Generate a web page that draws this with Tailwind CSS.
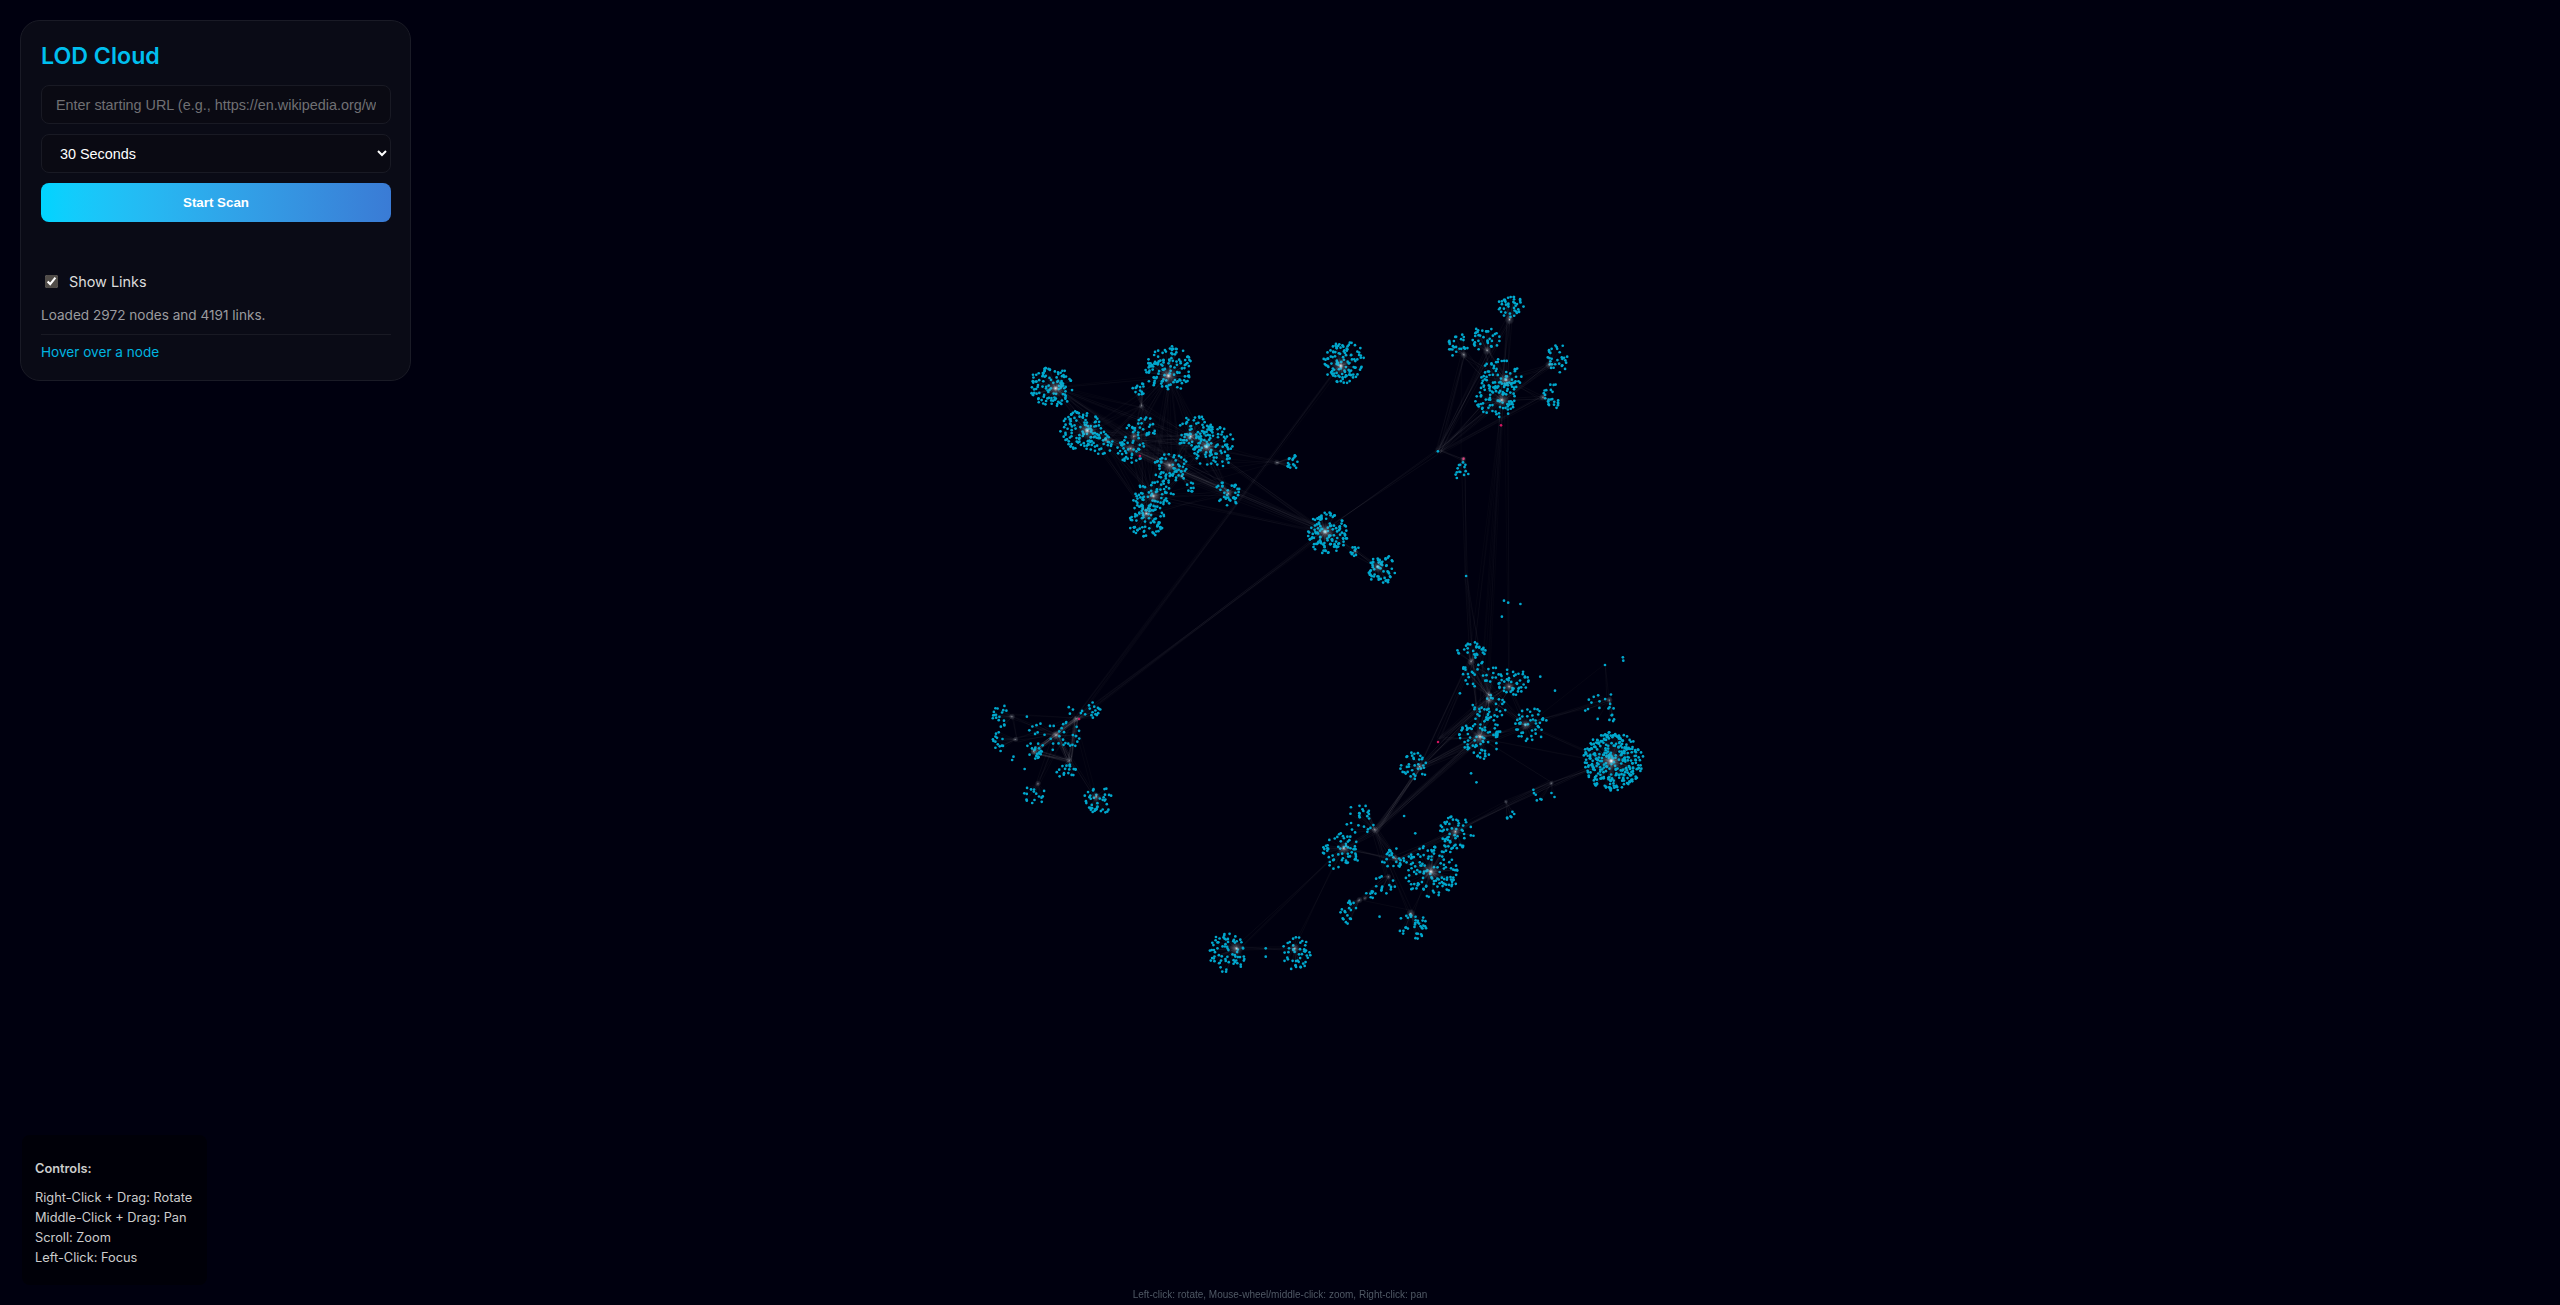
<!DOCTYPE html>
<html lang="en">
<head>
    <meta charset="UTF-8">
    <meta name="viewport" content="width=device-width, initial-scale=1.0">
    <title>LOD Cloud</title>
    <script src="https://cdn.jsdelivr.net/npm/@tailwindcss/browser@4"></script>
</head>
<body class="relative w-full h-screen overflow-hidden bg-[#00000f] font-['Inter',sans-serif] [color-scheme:dark]">
    <!-- Graph -->
    <canvas id="graph" width="2560" height="1305" class="absolute inset-0 block"></canvas>

    <!-- Scan panel -->
    <div class="absolute top-5 left-5 w-[391px] h-[361px] rounded-[20px] border border-[#1a1b26] bg-[#0a0b16] pl-5 pr-[19px] py-5 flex flex-col">
        <h1 class="text-[23.2px] leading-7 font-semibold text-[#00bfef] mt-[1px]">LOD Cloud</h1>
        <input type="text" placeholder="Enter starting URL (e.g., https://en.wikipedia.org/wiki/Main_Page)" class="mt-[15px] h-[39px] w-full shrink-0 rounded-lg border border-[#191a24] bg-[#0a0a13] px-[14px] text-[14.4px] text-white placeholder:text-[#707074] font-['Liberation_Sans',sans-serif] outline-none">
        <select class="mt-[10px] h-[39px] w-full shrink-0 rounded-lg border border-[#191a24] bg-[#0a0a13] pl-[14px] text-[14.4px] text-white font-['Liberation_Sans',sans-serif] outline-none appearance-auto">
            <option>30 Seconds</option>
            <option>60 Seconds</option>
            <option>120 Seconds</option>
        </select>
        <button class="mt-[10px] h-[39px] w-full shrink-0 rounded-lg bg-gradient-to-r from-[#00d4ff] to-[#3a7bd5] text-[13.33px] font-bold text-white font-['Liberation_Sans',sans-serif]">Start Scan</button>
        <label class="mt-[49px] flex items-center h-[22px] pl-[4px] text-[14.4px] text-[#dcdcdc]">
            <input type="checkbox" checked class="w-[13px] h-[13px] mr-[11px] m-0 accent-[#504c48]">
            Show Links
        </label>
        <p class="mt-[12px] text-[13.6px] leading-[20px] text-[#9b9b9f]">Loaded 2972 nodes and 4191 links.</p>
        <div class="mt-[9px] border-t border-[#191a24]"></div>
        <p class="mt-[7px] text-[13.6px] leading-[20px] text-[#00b4e0]">Hover over a node</p>
    </div>

    <!-- Controls help -->
    <div class="absolute left-[22px] bottom-[20px] w-[185px] h-[150px] rounded-lg bg-[#000008] px-[13px] pt-[24px] text-[12.8px] leading-[20px] text-[#cccccc]">
        <p class="font-semibold mb-[9px]">Controls:</p>
        <p>Right-Click + Drag: Rotate</p>
        <p>Middle-Click + Drag: Pan</p>
        <p>Scroll: Zoom</p>
        <p>Left-Click: Focus</p>
    </div>

    <!-- Nav info -->
    <div class="absolute bottom-[3px] left-0 w-full text-center text-[10px] leading-[14px] text-[#4f5865] font-['Liberation_Sans',sans-serif]">Left-click: rotate, Mouse-wheel/middle-click: zoom, Right-click: pan</div>

    <script>
        // seeded random so every render gives the same cloud
        let seed = 4191;
        function rnd() {
            seed = (seed * 1664525 + 1013904223) % 4294967296;
            return seed / 4294967296;
        }

        // crop coordinates from the two views of the graph, converted to page pixels
        const up = (x, y) => [980 + x / 2.376, 280 + y / 3];
        const low = (x, y) => [980 + x / 2.24, 620 + y / 3];

        // [hubX, hubY, blobX, blobY, radiusX, radiusY, leaves]
        const upper = [
            [180,325,170,320,50,62,110], [448,288,450,268,55,68,120], [857,258,865,245,48,62,110],
            [255,452,240,452,48,62,110], [300,480,290,495,25,40,25], [365,470,385,440,38,30,30],
            [358,505,360,510,35,40,40], [500,470,510,460,45,55,70], [538,500,555,500,48,65,90],
            [450,555,455,565,42,45,60], [480,590,500,620,18,15,8], [412,648,410,650,48,45,70],
            [395,700,395,720,45,50,70], [590,640,590,640,30,38,35], [705,548,742,550,12,32,16],
            [384,378,382,328,20,18,14], [820,755,825,758,48,62,120], [892,815,892,815,11,18,10],
            [945,860,955,868,33,44,60], [1258,120,1260,80,32,32,40], [1205,212,1200,175,36,34,35],
            [1150,225,1135,198,24,36,25], [1352,255,1375,235,28,44,30], [1337,352,1360,350,22,40,24],
            [1250,300,1238,290,50,52,70], [1240,360,1225,360,48,55,70], [1148,537,1145,575,17,30,14]
        ];
        const lower = [
            [1414,423,1417,423,66,86,300], [1100,125,1100,95,32,30,28], [1140,225,1120,165,45,40,30],
            [1185,200,1195,185,38,40,45], [1140,240,1140,260,38,40,30], [1120,350,1120,350,48,65,80],
            [1222,315,1232,312,38,50,45], [985,440,970,440,30,45,35], [1410,240,1395,265,40,50,20],
            [1280,490,1255,525,35,20,8], [1178,545,1188,585,14,12,6], [885,630,850,600,35,45,25],
            [815,685,810,695,42,55,60], [1065,635,1065,640,42,50,55], [930,715,930,715,30,30,25],
            [1010,755,1010,755,60,78,120], [915,770,905,795,25,30,14], [850,840,828,875,22,35,20],
            [862,835,875,825,12,14,8], [965,880,968,920,35,38,35], [575,985,555,997,40,62,70],
            [705,985,708,1000,32,50,45], [215,297,235,270,38,28,20], [170,345,170,345,60,50,35],
            [80,358,40,365,12,36,14], [72,290,50,285,22,36,18], [120,395,120,395,18,30,20],
            [200,420,197,455,24,22,18], [130,490,122,525,25,30,16], [260,530,265,540,33,42,40]
        ];

        function toCluster(row, conv, sx) {
            const hub = conv(row[0], row[1]);
            const blob = conv(row[2], row[3]);
            return { hub, blob, rx: row[4] / sx, ry: row[5] / 3, n: row[6] };
        }
        const clusters = upper.map(r => toCluster(r, up, 2.376)).concat(lower.map(r => toCluster(r, low, 2.24)));
        const U = i => clusters[i].hub;
        const L = i => clusters[i + upper.length].hub;

        // loose nodes between the clusters
        const relayA = up(1088, 514);
        const relayB = up(1155, 888);
        const singles = [relayA, relayB, up(1245,962), up(1255,968), up(1284,972), up(1240,1010),
            low(1400,135), low(1440,112), low(1441,122), low(1255,170), low(1288,212), low(640,985),
            low(640,1010), low(895,890), low(100,447), low(1112,487), low(1100,460), low(1075,220),
            low(950,588), low(975,640), low(105,290), low(75,410), low(72,420)];
        const pinks = [up(1238,436), up(380,528), up(1149,536), low(222,297), low(1026,366)];

        const ctx = document.getElementById('graph').getContext('2d');

        function link(a, b, count, alpha) {
            ctx.strokeStyle = `rgba(255,255,255,${alpha * 0.8})`;
            ctx.lineWidth = 1;
            for (let i = 0; i < count; i++) {
                ctx.beginPath();
                ctx.moveTo(a[0] + (rnd() - 0.5) * 6, a[1] + (rnd() - 0.5) * 6);
                ctx.lineTo(b[0] + (rnd() - 0.5) * 6, b[1] + (rnd() - 0.5) * 6);
                ctx.stroke();
            }
        }

        // dense bundles inside the groups
        const leftGroup = [0,1,3,4,5,6,7,8,9,10,11,12,13,15];
        leftGroup.forEach(a => leftGroup.forEach(b => { if (a < b) link(U(a), U(b), 3, 0.025); }));
        [3,5,6,7,8,9,10,11].forEach(a => { link(U(a), U(16), 3, 0.035); link(U(a), U(14), 1, 0.03); link(U(a), U(13), 1, 0.03); });
        link(U(16), U(17), 4, 0.05); link(U(17), U(18), 5, 0.05);
        link(U(2), L(22), 6, 0.03);
        link(U(16), L(22), 8, 0.03);
        link(U(16), relayA, 3, 0.05);
        [19,20,21,22,23,24,25].forEach(a => link(relayA, U(a), 5, 0.035));
        link(relayA, U(26), 3, 0.05);
        [19,20,21,22,23].forEach(a => { link(U(24), U(a), 3, 0.04); link(U(25), U(a), 3, 0.04); });
        link(U(26), relayB, 3, 0.04);
        link(U(21), U(26), 1, 0.03);
        [1,2,5].forEach(a => { link(relayB, L(a), 3, 0.025); link(U(25), L(a), 3, 0.025); });
        link(U(24), L(3), 3, 0.025);

        // lower right group
        const lowRight = [1,2,3,4,5,6,7];
        lowRight.forEach(a => lowRight.forEach(b => { if (a < b) link(L(a), L(b), 3, 0.04); }));
        [1,2,3,4,5].forEach(a => { link(L(a), low(1030,360), 3, 0.04); });
        link(L(5), L(7), 5, 0.05); link(L(5), L(11), 12, 0.04); link(L(7), L(11), 14, 0.045);
        link(L(11), L(12), 5, 0.05); link(L(11), L(14), 6, 0.05); link(L(12), L(14), 4, 0.05);
        link(L(14), L(13), 6, 0.05); link(L(13), L(15), 4, 0.05); link(L(14), L(15), 4, 0.05);
        link(L(11), L(16), 3, 0.04); link(L(11), L(19), 3, 0.04); link(L(16), L(17), 3, 0.04);
        link(L(15), L(19), 2, 0.04); link(L(17), L(19), 1, 0.04); link(L(13), L(9), 4, 0.04);
        link(L(12), L(20), 3, 0.04); link(L(12), L(21), 2, 0.035); link(L(20), L(21), 4, 0.04);
        link(L(0), L(13), 3, 0.03); link(L(0), L(6), 3, 0.035); link(L(0), L(5), 2, 0.03);
        link(L(0), L(9), 4, 0.05); link(L(6), L(8), 4, 0.04); link(L(8), low(1400,135), 2, 0.04);
        link(L(6), low(1400,135), 1, 0.03); link(L(5), L(9), 2, 0.03); link(L(13), L(10), 2, 0.03);
        link(L(9), L(10), 3, 0.04);

        // lower left group
        const lowLeft = [22,23,26,27];
        lowLeft.forEach(a => lowLeft.forEach(b => { if (a < b) link(L(a), L(b), 12, 0.05); }));
        [24,25,28,29].forEach(a => { link(L(23), L(a), 3, 0.04); link(L(22), L(a), 2, 0.03); });
        link(L(24), L(25), 2, 0.04);

        // spokes and leaves, spokes first so the dots sit on top
        const leaves = [];
        clusters.forEach(c => {
            for (let i = 0; i < c.n; i++) {
                // radius stepped so the disc fills evenly, angle free so no spiral shows
                const a = rnd() * Math.PI * 2;
                const d = Math.pow((i + 0.5) / c.n, 0.45) * (0.96 + rnd() * 0.1);
                const x = c.blob[0] + Math.cos(a) * d * c.rx;
                const y = c.blob[1] + Math.sin(a) * d * c.ry;
                leaves.push([x, y]);
                ctx.strokeStyle = 'rgba(255,255,255,0.035)';
                ctx.lineWidth = 0.8;
                ctx.beginPath();
                ctx.moveTo(c.hub[0], c.hub[1]);
                ctx.lineTo(x, y);
                ctx.stroke();
            }
        });

        ctx.fillStyle = '#00a8ce';
        leaves.concat(singles).forEach(p => {
            ctx.beginPath();
            ctx.arc(p[0], p[1], 1.35, 0, Math.PI * 2);
            ctx.fill();
        });

        ctx.fillStyle = '#d0155f';
        pinks.forEach(p => {
            ctx.beginPath();
            ctx.arc(p[0], p[1], 1.3, 0, Math.PI * 2);
            ctx.fill();
        });

        // soft glow on each hub
        clusters.forEach(c => {
            const r = Math.min(9, 2 + c.n / 14);
            const g = ctx.createRadialGradient(c.hub[0], c.hub[1], 0, c.hub[0], c.hub[1], r);
            g.addColorStop(0, `rgba(235,240,245,${Math.min(0.85, 0.35 + c.n / 200)})`);
            g.addColorStop(0.3, 'rgba(200,210,220,0.22)');
            g.addColorStop(1, 'rgba(200,210,220,0)');
            ctx.fillStyle = g;
            ctx.beginPath();
            ctx.arc(c.hub[0], c.hub[1], r, 0, Math.PI * 2);
            ctx.fill();
        });
    </script>
</body>
</html>
